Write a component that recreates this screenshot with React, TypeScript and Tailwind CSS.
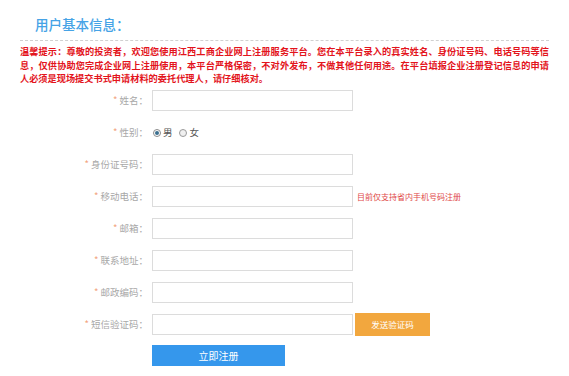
import React from "react";

const cjk = { fontFamily: '"Noto Sans CJK SC", "Noto Sans", sans-serif' };

function Label({ text }: { text: string }) {
  return (
    <div className="w-[148px] shrink-0 text-right text-[9.5px] leading-[21px] text-[#a8a8a8]">
      <span className="text-[#f2a27c]">*</span> {text}：
    </div>
  );
}

function Field({ text, children }: { text: string; children?: React.ReactNode }) {
  return (
    <div className="flex h-[21px] items-center">
      <Label text={text} />
      <div className="ml-[4px] h-[21px] w-[201px] border border-[#dcdcdc] bg-white" />
      {children}
    </div>
  );
}

export default function App() {
  return (
    <div className="h-[376px] w-[569px] overflow-hidden bg-white" style={cjk}>
      <div className="pl-[35px] pt-[16px] text-[13.5px] leading-[16px] font-medium text-[#46a3e6]">
        用户基本信息：
      </div>
      <div className="mx-[20px] mt-[8px] border-t border-dashed border-[#d0d0d0]" />
      <div className="mt-[4px] px-[20px] text-[9.2px] font-bold leading-[13.5px] text-[#e3141c]">
        <div className="whitespace-nowrap [text-align-last:justify]">
          温馨提示：尊敬的投资者，欢迎您使用江西工商企业网上注册服务平台。您在本平台录入的真实姓名、身份证号码、电话号码等信
        </div>
        <div className="whitespace-nowrap [text-align-last:justify]">
          息，仅供协助您完成企业网上注册使用，本平台严格保密，不对外发布，不做其他任何用途。在平台填报企业注册登记信息的申请
        </div>
        <div className="whitespace-nowrap">人必须是现场提交书式申请材料的委托代理人，请仔细核对。</div>
      </div>
      <div className="mt-[4.5px] flex flex-col gap-[11px]">
        <Field text="姓名" />
        <div className="flex h-[21px] items-center">
          <Label text="性别" />
          <div className="ml-[4px] flex items-center text-[9.5px] text-[#555]">
            <span className="ml-[1px] flex h-[8px] w-[8px] items-center justify-center rounded-full border border-[#8a8a8a] bg-white">
              <span className="h-[4px] w-[4px] rounded-full bg-[#3b6f8f]" />
            </span>
            <span className="ml-[2px]">男</span>
            <span className="ml-[6px] h-[8px] w-[8px] rounded-full border border-[#9a9a9a] bg-[#f0f0f0]" />
            <span className="ml-[3px]">女</span>
          </div>
        </div>
        <Field text="身份证号码" />
        <Field text="移动电话">
          <span className="ml-[4px] text-[8px] text-[#e04848]">目前仅支持省内手机号码注册</span>
        </Field>
        <Field text="邮箱" />
        <Field text="联系地址" />
        <Field text="邮政编码" />
        <div className="flex h-[21px] items-center">
          <Label text="短信验证码" />
          <div className="ml-[4px] h-[21px] w-[201px] border border-[#dcdcdc] bg-white" />
          <div className="ml-[2px] flex h-[23px] w-[75px] items-center justify-center bg-[#f2a73e] text-[8.5px] text-white">
            发送验证码
          </div>
        </div>
        <div className="-mt-[1px] flex">
          <div className="w-[152px] shrink-0" />
          <div className="flex h-[21px] w-[133px] items-center justify-center bg-[#3597ec] text-[10px] text-white">
            立即注册
          </div>
        </div>
      </div>
    </div>
  );
}
